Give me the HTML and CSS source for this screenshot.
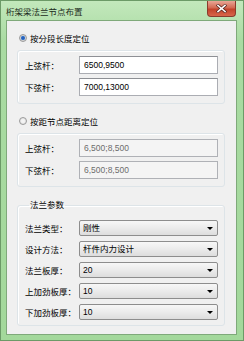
FILE: index.html
```html
<!DOCTYPE html>
<html lang="zh-CN">
<head>
    <meta charset="UTF-8">
    <meta name="viewport" content="width=device-width, initial-scale=1.0">
    <link rel="stylesheet" href="styles.css">
    <title>桁架梁法兰节点布置</title>
</head>
<body>
    <div class="window">
        <div class="titlebar">
            <span class="title">桁架梁法兰节点布置</span>
            <div class="close-btn">
                <svg width="11" height="9" viewBox="0 0 11 9">
                    <path d="M2 1.5 L9 7.5 M9 1.5 L2 7.5" stroke="#5a2a22" stroke-width="3" stroke-linecap="square"/>
                    <path d="M2 1.5 L9 7.5 M9 1.5 L2 7.5" stroke="#fff" stroke-width="1.6" stroke-linecap="square"/>
                </svg>
            </div>
        </div>

        <div class="client">
            <label class="radio-row">
                <input type="radio" name="mode" checked>
                <span>按分段长度定位</span>
            </label>
            <div class="group">
                <span class="field-label">上弦杆：</span>
                <input class="text-field" type="text" value="6500,9500">
                <span class="field-label">下弦杆：</span>
                <input class="text-field" type="text" value="7000,13000">
            </div>

            <label class="radio-row second">
                <input type="radio" name="mode">
                <span>按距节点距离定位</span>
            </label>
            <div class="group">
                <span class="field-label">上弦杆：</span>
                <input class="text-field" type="text" value="6,500;8,500" disabled>
                <span class="field-label">下弦杆：</span>
                <input class="text-field" type="text" value="6,500;8,500" disabled>
            </div>

            <fieldset class="params">
                <legend>法兰参数</legend>
                <div class="param-grid">
                    <span class="field-label">法兰类型：</span>
                    <div class="select"><select><option>刚性</option></select></div>
                    <span class="field-label">设计方法：</span>
                    <div class="select"><select><option>杆件内力设计</option></select></div>
                    <span class="field-label">法兰板厚：</span>
                    <div class="select"><select><option>20</option></select></div>
                    <span class="field-label">上加劲板厚：</span>
                    <div class="select"><select><option>10</option></select></div>
                    <span class="field-label">下加劲板厚：</span>
                    <div class="select"><select><option>10</option></select></div>
                </div>
            </fieldset>
        </div>
    </div>
</body>
</html>
```

FILE: styles.css
```css
* {
    box-sizing: border-box;
}

body {
    margin: 0;
    font-family: "Liberation Sans", "Noto Sans CJK SC", sans-serif;
    font-size: 8.5px;
    color: #000;
}

.window {
    width: 244px;
    height: 341px;
    display: flex;
    flex-direction: column;
    background: linear-gradient(#c3e8bc, #a9dba2 40px, #a3d89b);
    border: 1px solid #6c9a67;
    padding: 0 6px 5px 5px;
}

.titlebar {
    height: 19px;
    display: flex;
    align-items: flex-start;
    justify-content: space-between;
}

.title {
    margin-top: 4px;
    color: #1b2a1a;
}

.close-btn {
    width: 29px;
    height: 16px;
    margin-right: 1px;
    display: flex;
    align-items: center;
    justify-content: center;
    background: linear-gradient(#e9a796, #d36a52 45%, #c2432a 55%, #d8664a);
    border: 1px solid #8a3b2c;
    border-top: none;
    border-radius: 0 0 4px 4px;
}

.client {
    flex: 1;
    background: #f0f0f0;
    border: 1px solid #7fa97a;
    padding: 10px 11px 0 10px;
}

.radio-row {
    height: 14px;
    display: flex;
    align-items: center;
    gap: 3px;
    padding-left: 2px;
}

.radio-row.second {
    margin-top: 10px;
}

.radio-row input {
    appearance: none;
    width: 8px;
    height: 8px;
    margin: 0;
    border-radius: 50%;
    border: 1px solid #9a9a9a;
    background: radial-gradient(circle, #f4f4f4 30%, #d8d8d8 100%);
}

.radio-row input:checked {
    background: radial-gradient(circle, #1f4fa8 0, #3c7cd2 45%, #d8d8d8 55%, #c8c8c8 100%);
}

.group {
    margin-top: 5px;
    height: 54px;
    border: 1px solid #dde4e8;
    border-radius: 3px;
    box-shadow: inset 1px 1px 0 #fff;
    padding: 5px 6px 7px 7px;
    display: grid;
    grid-template-columns: 54px 1fr;
    grid-auto-rows: 18px;
    row-gap: 4px;
    align-items: center;
}

.text-field {
    height: 18px;
    width: 100%;
    margin: 0;
    padding: 0 4px;
    font: inherit;
    color: #000;
    background: #fff;
    border: 1px solid #abadb3;
    border-top-color: #8e9095;
}

.text-field:disabled {
    background: #f4f4f4;
    color: #6d6d6d;
    border-color: #afb1b6;
}

.params {
    margin: 12px 0 0 0;
    padding: 0 6px 5px 7px;
    border: 1px solid #dde4e8;
    border-radius: 3px;
    box-shadow: inset 1px 1px 0 #fff;
}

.params legend {
    margin-left: 4px;
    padding: 0 1px;
    line-height: 12px;
}

.param-grid {
    margin-top: 9px;
    display: grid;
    grid-template-columns: 54px 1fr;
    grid-auto-rows: 16px;
    row-gap: 5px;
    align-items: center;
}

.select {
    position: relative;
    height: 16px;
}

.select select {
    appearance: none;
    width: 100%;
    height: 16px;
    margin: 0;
    padding: 0 12px 0 3px;
    font: inherit;
    color: #000;
    background: linear-gradient(#f7f7f7, #ebebeb 50%, #dddddd);
    border: 1px solid #8d8d8d;
    border-radius: 2px;
}

.select::after {
    content: "";
    position: absolute;
    right: 5px;
    top: 7px;
    border-left: 3px solid transparent;
    border-right: 3px solid transparent;
    border-top: 3px solid #000;
    pointer-events: none;
}
```
